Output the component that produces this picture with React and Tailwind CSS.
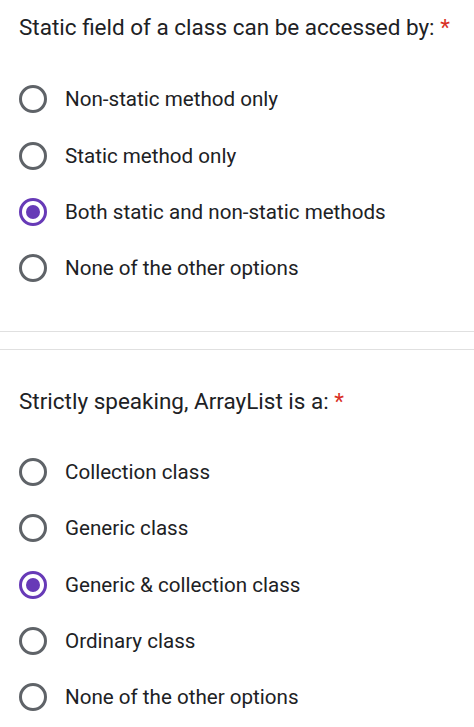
const questions = [
  {
    title: 'Static field of a class can be accessed by:',
    options: ['Non-static method only', 'Static method only', 'Both static and non-static methods', 'None of the other options'],
    selected: 2,
  },
  {
    title: 'Strictly speaking, ArrayList is a:',
    options: ['Collection class', 'Generic class', 'Generic & collection class', 'Ordinary class', 'None of the other options'],
    selected: 2,
  },
]

function Radio({ checked }) {
  return (
    <span
      className={
        checked
          ? 'flex h-7 w-7 shrink-0 items-center justify-center rounded-full border-[3px] border-[#673ab7]'
          : 'flex h-7 w-7 shrink-0 items-center justify-center rounded-full border-[3px] border-[#5f6368]'
      }
    >
      {checked && <span className="h-[14px] w-[14px] rounded-full bg-[#673ab7]" />}
    </span>
  )
}

function Question({ title, options, selected, first }) {
  return (
    <section className={first ? 'pt-[13px] pb-[34px] border-b border-[#e0e0e0]' : 'pt-[37px] border-t border-[#e0e0e0]'}>
      <h2 className="px-[19px] text-[22.5px] leading-[28px] text-[#202124]">
        {title} <span className="text-[#d93025]">*</span>
      </h2>
      <div className={first ? 'mt-[30px]' : 'mt-[29px]'}>
        {options.map((opt, i) => (
          <div key={opt} className="flex h-[56.4px] items-center gap-[18px] px-[19px]">
            <Radio checked={i === selected} />
            <span className="text-[20.6px] leading-[26px] text-[#202124]">{opt}</span>
          </div>
        ))}
      </div>
    </section>
  )
}

export default function App() {
  return (
    <div className="min-h-screen bg-white" style={{ fontFamily: 'Roboto, "Liberation Sans", sans-serif' }}>
      <Question {...questions[0]} first />
      <div className="h-[17px]" />
      <Question {...questions[1]} />
    </div>
  )
}
